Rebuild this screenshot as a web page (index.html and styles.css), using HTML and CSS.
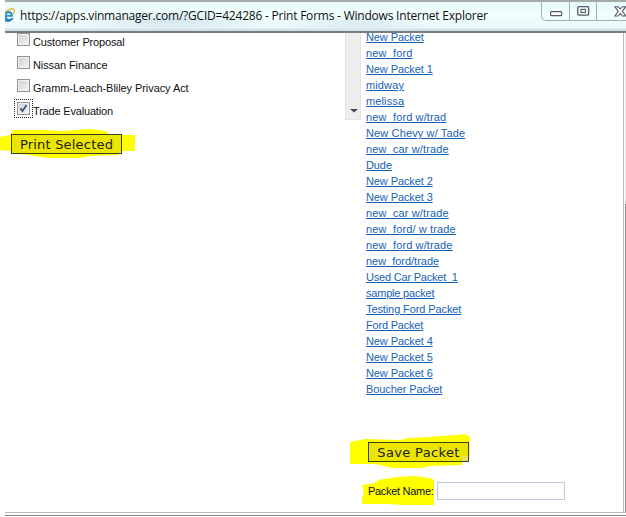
FILE: index.html
```html
<!DOCTYPE html>
<html lang="en">
<head>
<meta charset="utf-8">
<title>Print Forms</title>
<link rel="stylesheet" href="styles.css">
</head>
<body>
<div class="window">
  <header class="titlebar">
    <svg class="ie" width="12" height="16" viewBox="0 0 12 16">
      <path d="M0 3.2C4 1.7 8 3.5 8.2 8.8H1.8C2.2 11.4 5 11.5 6 10H8.2C7 13.7 3 14.2 0 12.5V9.5L.2 6.8z" fill="#2b8fd2"/>
      <path d="M1.6 7.1C2 4.8 5.2 4.7 5.6 7.1z" fill="#e8faff"/>
      <path d="M0 4.2C4 .8 8.8-.4 9.3 2.2 9.5 3.5 9 4.8 8 6.2" fill="none" stroke="#e6b93e" stroke-width="1.4"/>
      <path d="M0 12.8C3 13.8 6.5 13 8 10.2" fill="none" stroke="#1464a8" stroke-width="1"/>
    </svg>
    <span class="caption">https://apps.vinmanager.com/?GCID=424286 - Print Forms - Windows Internet Explorer</span>
    <div class="controls">
      <span class="ctl min"><svg width="13" height="6" viewBox="0 0 13 6"><rect x=".6" y=".6" width="11" height="4" rx=".7" fill="#fff" stroke="#555b66" stroke-width="1.2"/></svg></span>
      <span class="ctl max"><svg width="13" height="10" viewBox="0 0 13 10"><rect x=".7" y=".7" width="11" height="8.4" rx="1" fill="#f4f6f8" stroke="#555b66" stroke-width="1.3"/><rect x="4" y="3.4" width="4.4" height="3" fill="#fff" stroke="#555b66" stroke-width="1.1"/></svg></span>
      <span class="ctl close"><svg width="13" height="11" viewBox="0 0 13 11"><path d="M.8.7H4.2L6.3 3 8.4.7H11.8L8.3 5.3 11.8 10H8.4L6.3 7.5 4.2 10H.8L4.3 5.3z" fill="#fff" stroke="#555b66" stroke-width="1.1"/></svg></span>
    </div>
  </header>
  <main class="page">
    <section class="forms">
      <div class="form-box">
        <ul class="checks">
          <li><span class="focus"><i class="box"></i></span><span class="t1">Customer Proposal</span></li>
          <li><span class="focus"><i class="box"></i></span><span class="t2">Nissan Finance</span></li>
          <li><span class="focus"><i class="box"></i></span><span class="t3">Gramm-Leach-Bliley Privacy Act</span></li>
          <li><span class="focus on"><i class="box"><svg width="9" height="9" viewBox="0 0 9 9"><path d="M1.3 4.2L3.5 7 7.5 1" fill="none" stroke="#40567f" stroke-width="1.8"/></svg></i></span><span class="t4">Trade Evaluation</span></li>
        </ul>
        <div class="scroll"><svg width="8" height="5" viewBox="0 0 8 5"><path d="M0 1H8L4 4.5z" fill="#4b4b4b"/></svg></div>
      </div>
      <div class="print-row">
        <svg class="mark" width="135" height="32" viewBox="0 0 135 32"><path d="M0 9L10 7 13 2 45 2 62 3 90 1 106 3 110 7 135 7V23L122 23 117 27 90 28 80 30 48 30 14 25 11 23 0 22z" fill="#ff0"/></svg>
        <button class="btn print">Print Selected</button>
      </div>
    </section>
    <section class="packets">
      <ul class="links">
        <li><a>New Packet</a></li>
        <li><a class="wide">new&nbsp; ford</a></li>
        <li><a>New Packet 1</a></li>
        <li><a class="wide">midway</a></li>
        <li><a class="wide">melissa</a></li>
        <li><a class="wide">new&nbsp; ford w/trad</a></li>
        <li><a class="wide">New Chevy w/ Tade</a></li>
        <li><a class="wide">new&nbsp; car w/trade</a></li>
        <li><a>Dude</a></li>
        <li><a>New Packet 2</a></li>
        <li><a>New Packet 3</a></li>
        <li><a class="wide">new&nbsp; car w/trade</a></li>
        <li><a class="wide">new&nbsp; ford/ w trade</a></li>
        <li><a class="wide">new&nbsp; ford w/trade</a></li>
        <li><a class="mid">new&nbsp; ford/trade</a></li>
        <li><a class="tight">Used Car Packet&nbsp; 1</a></li>
        <li><a class="tight">sample packet</a></li>
        <li><a>Testing Ford Packet</a></li>
        <li><a class="tight">Ford Packet</a></li>
        <li><a>New Packet 4</a></li>
        <li><a>New Packet 5</a></li>
        <li><a>New Packet 6</a></li>
        <li><a>Boucher Packet</a></li>
      </ul>
      <div class="save-row">
        <svg class="mark" width="122" height="36" viewBox="0 0 122 36"><path d="M0 8L15 5 50 6 58 4 80 3 105 1 115 0 120 3V22H112V31L80 32 72 34 42 34 25 30H0z" fill="#ff0"/></svg>
        <button class="btn save">Save Packet</button>
      </div>
      <div class="name-row">
        <svg class="mark" width="74" height="32" viewBox="0 0 74 32"><path d="M0 10L13 8 16 5 35 2 52 1 68 3 72 5V30L42 30 25 29H0V22L2 19z" fill="#ff0"/></svg>
        <label for="pn">Packet Name:</label>
        <input id="pn" type="text">
      </div>
    </section>
    <div class="edge"></div>
  </main>
  <div class="bottom"></div>
</div>
</body>
</html>
```
FILE: styles.css
```css
* { box-sizing: border-box; }
body { margin: 0; background: #fff; overflow: hidden; font: 11px/16px "Liberation Sans", Arial, sans-serif; color: #111; }
ul { list-style: none; margin: 0; padding: 0; }
.window { width: 621px; height: 517px; margin-left: 5px; display: flex; flex-direction: column; }
.titlebar { height: 33px; flex: none; display: flex; border-top: 2px solid #a5aba7; border-bottom: 2px solid #777e80; overflow: hidden;
  background: radial-gradient(ellipse 90px 12px at 27% 65%, #d3e6ef, transparent), radial-gradient(ellipse 70px 12px at 57% 75%, #dbebf2, transparent), linear-gradient(#e7faf9, #f2fffe 45%, #e9f7fa 88%, #c9d6da); }
.ie { margin-top: 6px; flex: none; }
.caption { margin-left: 3px; width: 500px; flex: none; white-space: nowrap; font: 12px/27px "Open Sans", "Noto Sans", sans-serif; color: #111; letter-spacing: -.215px; }
.controls { margin-left: 21px; height: 19px; width: 86px; flex: none; display: flex; border: solid #a3afb1; border-width: 0 0 1px 1px; border-radius: 0 0 0 5px; }
.ctl { display: flex; flex: none; }
.ctl + .ctl { border-left: 1px solid #a3afb1; }
.min { width: 27px; padding: 9px 0 0 8px; }
.max { width: 27px; padding: 4px 0 0 7px; }
.close { width: 31px; padding: 4px 0 0 17px; }
.page { height: 479px; flex: none; display: flex; }
.forms { width: 356px; flex: none; }
.form-box { height: 87px; display: flex; justify-content: space-between; overflow: hidden; }
.checks { padding-left: 9px; margin-top: -3px; }
.checks li { display: flex; height: 23px; align-items: flex-start; white-space: nowrap; }
.checks li > span:last-child { padding-top: 4px; }
.focus { width: 19px; height: 19px; flex: none; padding: 2px; border: 1px solid transparent; }
.focus.on { border: 1px dotted #222; }
.box { display: block; width: 13px; height: 13px; border: 1px solid #929292; padding: 1px; background: linear-gradient(135deg, #cbcfd5, #f5f5f5); box-shadow: inset 0 0 0 1px #f1f1f1; }
.box svg { display: block; }
.t1 { letter-spacing: -.15px; }
.t2 { letter-spacing: -.1px; }
.t3 { letter-spacing: -.07px; }
.t4 { letter-spacing: -.18px; }
.scroll { width: 16px; background: #eee; border: 1px solid #e3e3e3; border-top: 0; display: flex; align-items: flex-end; padding: 0 0 6px 4px; }
.print-row, .save-row, .name-row { position: relative; display: flex; }
.mark { position: absolute; z-index: -1; }
.print-row { padding: 14px 0 0 6px; }
.print-row .mark { left: -5px; top: 8px; }
.btn { height: 20px; padding: 0; border: 1px solid #39421a; background: rgba(225, 215, 0, .65); font: 13px/17px "DejaVu Sans", Verdana, sans-serif; color: #222; white-space: nowrap; }
.print { width: 111px; letter-spacing: .2px; }
.save { width: 101px; letter-spacing: .35px; }
.packets { width: 257px; flex: none; padding-left: 5px; }
.links li { height: 16px; white-space: nowrap; }
.links li:first-child { height: 12px; line-height: 8px; }
.links a { color: #1861b5; text-decoration: underline; letter-spacing: -.1px; }
.links .wide { letter-spacing: .13px; }
.links .mid { letter-spacing: -.02px; }
.links .tight { letter-spacing: -.2px; }
.save-row { padding: 45px 0 0 2px; }
.save-row .mark { left: -16px; top: 37px; }
.name-row { padding: 20px 0 0 2px; }
.name-row .mark { left: -4px; top: 13px; }
.name-row label { width: 69px; line-height: 18px; white-space: nowrap; letter-spacing: -.3px; }
.name-row input { width: 128px; height: 18px; border: 1px solid #bdc9e0; background: #fff; padding: 0; }
.edge { width: 8px; height: 479px; flex: none; background: linear-gradient(#e4e4e4, #e4e4e4 171px, #888 171px) 7px 0 / 1px 100% no-repeat, linear-gradient(#bbb, #bbb) 5px 0 / 1px 100% no-repeat; }
.bottom { flex: none; height: 4px; border-top: 1px solid #bbb; border-bottom: 1px solid #888; background: #fafafa; }
```
